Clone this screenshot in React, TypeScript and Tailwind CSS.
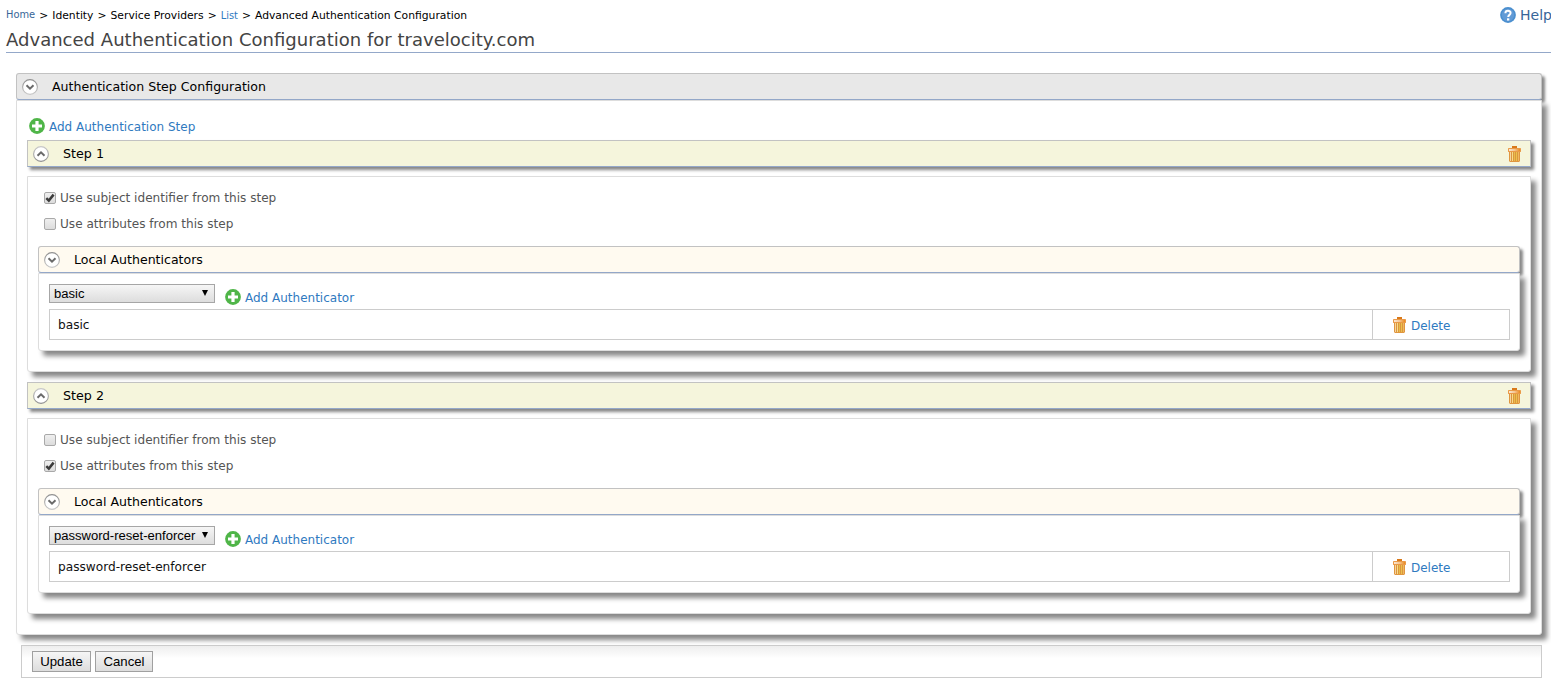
import React, { useState } from "react";

function Chevron({ up = false }: { up?: boolean }) {
  return (
    <svg width="16" height="16" viewBox="0 0 16 16" className="shrink-0">
      <defs>
        <linearGradient id="ring" x1="0" y1="0" x2="0" y2="1">
          <stop offset="0" stopColor="#c8c8c8" />
          <stop offset="1" stopColor="#8f8f8f" />
        </linearGradient>
        <linearGradient id="ringDown" x1="0" y1="0" x2="0" y2="1">
          <stop offset="0" stopColor="#8f8f8f" />
          <stop offset="1" stopColor="#c8c8c8" />
        </linearGradient>
      </defs>
      <circle cx="8" cy="8" r="7.4" fill="#fff" stroke={up ? "url(#ring)" : "url(#ringDown)"} strokeWidth="1.1" />
      <path
        d={up ? "M4.5 9.7 8 6.3l3.5 3.4" : "M4.5 6.3 8 9.7l3.5-3.4"}
        fill="none"
        stroke="#6a6a6a"
        strokeWidth="2"
      />
    </svg>
  );
}

function AddIcon() {
  return (
    <svg width="16" height="16" viewBox="0 0 16 16" className="shrink-0">
      <circle cx="8" cy="8" r="7.9" fill="#4fb548" />
      <path d="M6.4 3h3.2v3.4H13v3.2H9.6V13H6.4V9.6H3V6.4h3.4z" fill="#fff" />
    </svg>
  );
}

function TrashIcon() {
  return (
    <svg width="16" height="16" viewBox="0 0 16 16" className="shrink-0">
      <defs>
        <linearGradient id="lid" x1="0" y1="0" x2="1" y2="0">
          <stop offset="0" stopColor="#fae6d2" />
          <stop offset="0.5" stopColor="#f5c794" />
          <stop offset="1" stopColor="#ea8a20" />
        </linearGradient>
      </defs>
      <rect x="6" y="0" width="5" height="2" fill="#d9791a" />
      <rect x="2" y="2" width="13" height="4" rx="0.4" fill="#ea9a48" />
      <rect x="3" y="3" width="11" height="2" fill="url(#lid)" />
      <path d="M3 6h11v9l-1 1H4l-1-1z" fill="#e0963f" />
      <path d="M4.5 6v9" stroke="#f6d3a0" />
      <path d="M6.5 6v9" stroke="#f8dc8c" />
      <path d="M8.5 6v9" stroke="#e9bd4a" />
      <path d="M10.5 6v9" stroke="#eac24c" />
      <path d="M12.5 6v9" stroke="#f0b860" />
      <path d="M5.5 6v9M7.5 6v9M9.5 6v9M11.5 6v9" stroke="#d9953f" strokeWidth="0.8" />
    </svg>
  );
}

function HelpIcon() {
  return (
    <svg width="16" height="16" viewBox="0 0 16 16" className="shrink-0">
      <circle cx="8" cy="8" r="7.9" fill="#4a8fcf" />
      <circle cx="8" cy="8" r="6.2" fill="#629bd6" />
      <path d="M5.4 6.2C5.4 3 10.6 3.1 10.6 6c0 1.9-2.4 1.9-2.4 4" fill="none" stroke="#fff" strokeWidth="2" />
      <rect x="7" y="11.3" width="2.3" height="2.2" fill="#fff" />
    </svg>
  );
}

function Check({ label, initial }: { label: string; initial: boolean }) {
  const [on, setOn] = useState(initial);
  return (
    <label className="flex h-[26px] items-center text-[12.1px] text-[#555]">
      <button
        type="button"
        role="checkbox"
        aria-checked={on}
        aria-label={label}
        onClick={() => setOn(!on)}
        className="mr-1 flex h-3 w-3 shrink-0 items-center justify-center rounded-[2px] border border-[#a9a9a9] bg-linear-to-b from-[#efefef] to-[#dcdcdc]"
      >
        {on && (
          <svg width="10" height="10" viewBox="0 0 10 10" className="shrink-0">
            <path d="M1.3 5.2 3.8 7.6 8.6 1.6" fill="none" stroke="#3b3b3b" strokeWidth="2.5" />
          </svg>
        )}
      </button>
      {label}
    </label>
  );
}

function Authenticators({ name }: { name: string }) {
  return (
    <section>
      <h3 className="flex h-[27px] items-center gap-[14px] rounded-[3px] border border-[#c2c2c2] border-b-[#94a8c9] bg-[#fffaf0] pl-[5px] text-[12.55px] text-black shadow-[3px_3px_3px_#888]">
        <Chevron />
        <span className="pt-[2px]">Local Authenticators</span>
      </h3>
      <div className="relative h-[78px] rounded-b-[3px] border border-[#ddd] bg-white pr-[9px] pt-[10px] pl-[10px] shadow-[5px_5px_5px_#888]">
        <div className="flex h-[25px] items-start gap-[10px]">
          <button
            type="button"
            className="flex h-[19px] w-[166px] items-center justify-between border border-[#a6a6a6] bg-linear-to-b from-[#f6f6f6] to-[#dddddd] pr-[5px] pl-1 font-['Liberation_Sans',sans-serif] text-[13.05px] text-black"
          >
            {name}
            <svg width="8" height="8" viewBox="0 0 8 8" className="mb-[2px]">
              <path d="M1 1h6L4 7z" fill="#000" />
            </svg>
          </button>
          <a className="flex items-center gap-1 pt-[5px] text-[12px] leading-4 text-[#2f7abf]">
            <AddIcon />
            <span className="pt-[2px] leading-[14px]">Add Authenticator</span>
          </a>
        </div>
        <div className="flex h-[31px] border border-[#ccc] text-[12.15px]">
          <div className="flex flex-1 items-center pt-[2px] pl-2 text-[#111]">{name}</div>
          <a className="flex w-[137px] items-center gap-1 border-l border-[#ccc] pl-[18px] text-[12px] text-[#2f7abf]">
            <TrashIcon />
            <span className="pt-[2px]">Delete</span>
          </a>
        </div>
      </div>
    </section>
  );
}

function Step({ n, subject, attributes, name }: { n: number; subject: boolean; attributes: boolean; name: string }) {
  return (
    <section className="mb-[10px]">
      <h2 className="flex h-[27px] items-center gap-[14px] border border-[#c2c2c2] border-b-[#94a8c9] bg-[#f5f5dc] pr-[8px] pl-[5px] text-[12.7px] text-black shadow-[3px_3px_3px_#888]">
        <Chevron up />
        <span className="flex-1">Step {n}</span>
        <TrashIcon />
      </h2>
      <div className="mt-[9px] h-[196px] rounded-b-[3px] border border-[#ddd] bg-white px-[10px] pt-2 shadow-[5px_5px_5px_#888]">
        <div className="mb-[9px] pl-[6px]">
          <Check label="Use subject identifier from this step" initial={subject} />
          <Check label="Use attributes from this step" initial={attributes} />
        </div>
        <Authenticators name={name} />
      </div>
    </section>
  );
}

export default function App() {
  return (
    <div className="h-[689px] overflow-hidden bg-white font-['DejaVu_Sans',sans-serif]">
      <header className="ml-[6px] h-[53px] border-b border-[#94a8c9]">
        <div className="flex h-[30px] items-center justify-between">
          <nav className="flex items-center gap-1 text-[10.77px] whitespace-pre text-black">
            <a className="text-[9.9px] text-[#386698]">Home</a>
            <span className="pt-[3px]">&gt;</span>
            <span className="pt-[3px]">Identity</span>
            <span className="pt-[3px]">&gt;</span>
            <span className="pt-[3px]">Service Providers</span>
            <span className="pt-[3px]">&gt;</span>
            <a className="pt-[3px] text-[9.9px] text-[#2f7abf]">List</a>
            <span className="pt-[3px]">&gt;</span>
            <span className="pt-[3px]">Advanced Authentication Configuration</span>
          </nav>
          <a className="-mr-px flex items-center gap-1 text-[14px] text-[#386698]">
            <HelpIcon />
            Help
          </a>
        </div>
        <h1 className="text-[18.04px] leading-5 text-[#444]">Advanced Authentication Configuration for travelocity.com</h1>
      </header>
      <main className="mt-5 ml-4 w-[1526px]">
        <h2 className="flex h-[27px] items-center gap-[14px] rounded-[3px] border border-[#c2c2c2] border-b-[#94a8c9] bg-[#e8e8e8] pl-[5px] text-[12.57px] text-black shadow-[3px_3px_3px_#888]">
          <Chevron />
          <span className="pt-[2px]">Authentication Step Configuration</span>
        </h2>
        <div className="relative h-[535px] rounded-b-[3px] border border-[#ddd] bg-white px-[10px] pt-[17px] shadow-[5px_5px_5px_#888]">
          <a className="mb-[6px] ml-[2px] flex h-4 items-center gap-1 text-[12px] text-[#2f7abf]">
            <AddIcon />
            <span className="pt-[2px]">Add Authentication Step</span>
          </a>
          <Step n={1} subject attributes={false} name="basic" />
          <Step n={2} subject={false} attributes name="password-reset-enforcer" />
        </div>
        <footer className="mt-[10px] ml-[5px] flex h-[33px] items-start gap-1 border border-[#ccc] bg-linear-to-b from-[#eeeeee] to-white to-40% pt-[5px] pl-[10px]">
          <button className="h-[21px] w-[59px] border border-[#a0a0a0] bg-linear-to-b from-[#f6f6f6] to-[#dddddd] font-['Liberation_Sans',sans-serif] text-[13.2px] leading-none text-black">
            Update
          </button>
          <button className="h-[21px] w-[58px] border border-[#a0a0a0] bg-linear-to-b from-[#f6f6f6] to-[#dddddd] font-['Liberation_Sans',sans-serif] text-[13.2px] leading-none text-black">
            Cancel
          </button>
        </footer>
      </main>
    </div>
  );
}
